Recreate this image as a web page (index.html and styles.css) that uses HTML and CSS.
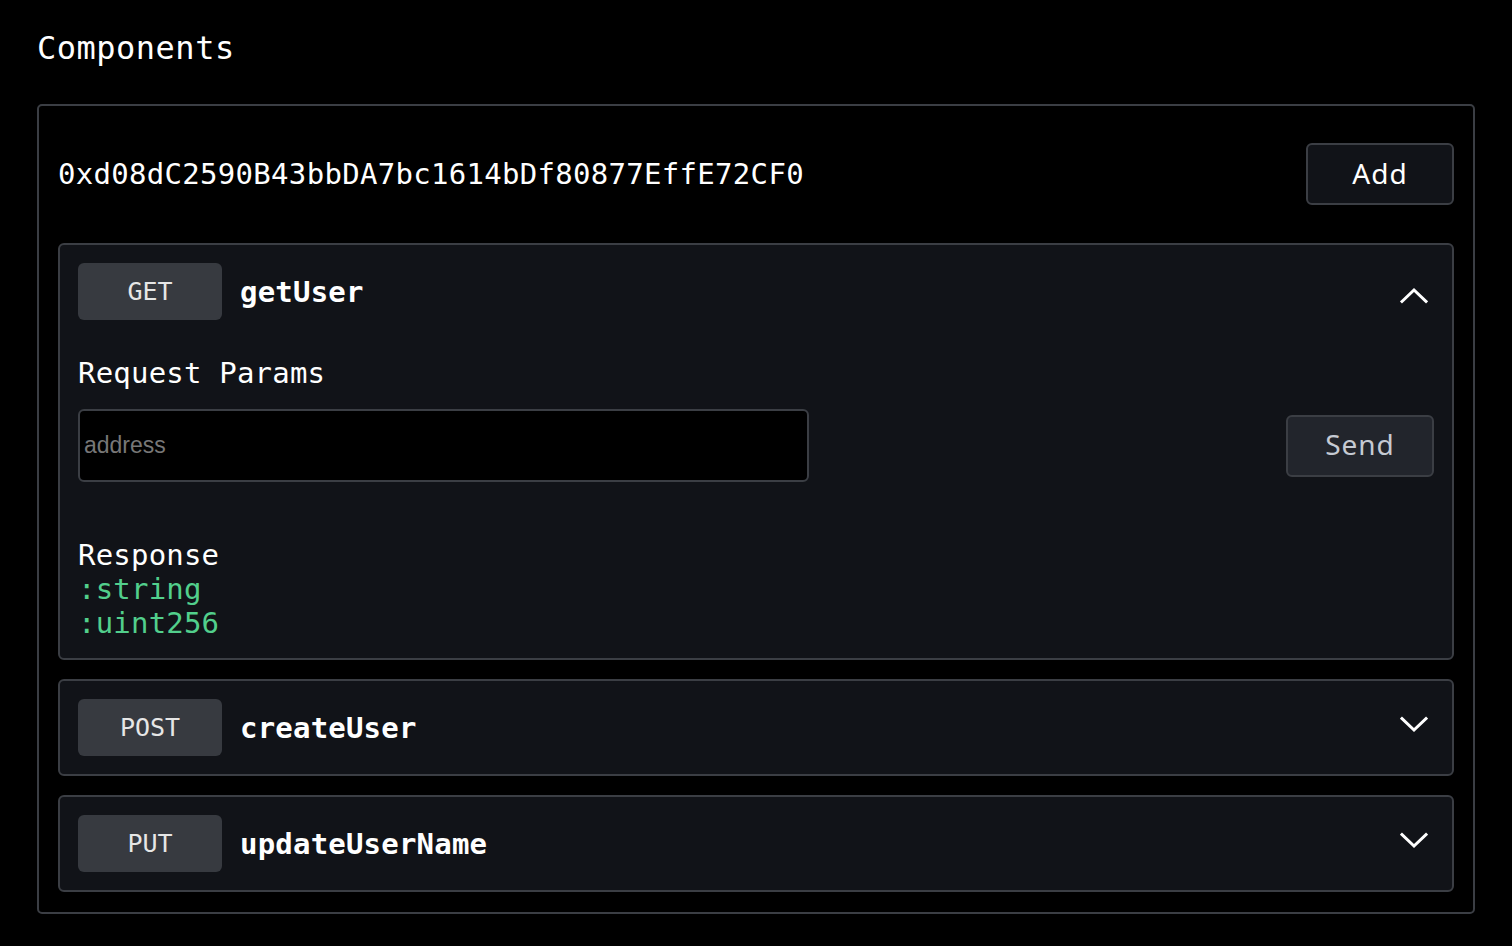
FILE: index.html
```html
<!DOCTYPE html>
<html lang="en">
<head>
<meta charset="utf-8">
<title>Components</title>
<link rel="stylesheet" href="styles.css">
</head>
<body>
<main class="page">
  <h1 class="title">Components</h1>
  <section class="panel">
    <div class="panel-head">
      <div class="address">0xd08dC2590B43bbDA7bc1614bDf80877EffE72CF0</div>
      <button class="btn btn-add">Add</button>
    </div>

    <div class="card">
      <div class="card-head">
        <span class="method">GET</span>
        <span class="fn">getUser</span>
        <span class="chev">
          <svg width="28" height="24" viewBox="0 0 28 24"><path d="M2 21.5 L14 10 L26 21.5" fill="none" stroke="#fff" stroke-width="3" stroke-linecap="square"/></svg>
        </span>
      </div>
      <div class="card-body">
        <div class="label">Request Params</div>
        <div class="param-row">
          <input class="input" type="text" placeholder="address">
          <button class="btn btn-send">Send</button>
        </div>
        <div class="response">
          <div class="label">Response</div>
          <div class="type">:string</div>
          <div class="type">:uint256</div>
        </div>
      </div>
    </div>

    <div class="card">
      <div class="card-head">
        <span class="method">POST</span>
        <span class="fn">createUser</span>
        <span class="chev">
          <svg width="28" height="24" viewBox="0 0 28 24"><path d="M2 2.5 L14 14 L26 2.5" fill="none" stroke="#fff" stroke-width="3" stroke-linecap="square"/></svg>
        </span>
      </div>
    </div>

    <div class="card">
      <div class="card-head">
        <span class="method">PUT</span>
        <span class="fn">updateUserName</span>
        <span class="chev">
          <svg width="28" height="24" viewBox="0 0 28 24"><path d="M2 2.5 L14 14 L26 2.5" fill="none" stroke="#fff" stroke-width="3" stroke-linecap="square"/></svg>
        </span>
      </div>
    </div>
  </section>
</main>
</body>
</html>
```

FILE: styles.css
```css
* { box-sizing: border-box; }

html, body {
  margin: 0;
  background: #000;
  color: #fff;
}

body {
  font-family: "DejaVu Sans Mono", "Liberation Mono", monospace;
}

.page {
  padding: 28px 37px 30px;
}

.title {
  margin: 0 0 36px;
  font-size: 32px;
  line-height: 40px;
  font-weight: 500;
  letter-spacing: 0.5px;
}

.panel {
  border: 2px solid #3b3e44;
  border-radius: 5px;
  padding: 19px 19px 20px;
  display: flex;
  flex-direction: column;
  gap: 19px;
}

.panel-head {
  display: flex;
  align-items: center;
  justify-content: space-between;
  padding: 18px 0 19px;
}

.address {
  font-size: 29px;
  letter-spacing: 0.3px;
  line-height: 34px;
}

.btn {
  font-family: "Noto Sans", "Open Sans", sans-serif;
  font-size: 28px;
  line-height: 1;
  width: 148px;
  height: 62px;
  border-radius: 6px;
  border: 2px solid #3b3e44;
  cursor: pointer;
  letter-spacing: 1px;
  padding: 0 0 3px;
}

.btn-add {
  background: #111318;
  color: #fff;
}

.btn-send {
  background: #22252c;
  color: #c5cad3;
}

.card {
  background: #111318;
  border: 2px solid #3b3e44;
  border-radius: 6px;
  padding: 18px;
}

.card-head {
  display: flex;
  align-items: center;
}

.method {
  width: 144px;
  height: 57px;
  border-radius: 6px;
  background: #373a40;
  color: #e6e6e6;
  font-size: 25px;
  display: flex;
  align-items: center;
  justify-content: center;
}

.fn {
  margin-left: 18px;
  font-size: 29px;
  font-weight: bold;
  letter-spacing: 0.2px;
  flex: 1;
}

.chev {
  display: flex;
  margin-right: 6px;
}

.card-body {
  padding-top: 36px;
}

.label {
  font-size: 29px;
  line-height: 34px;
  letter-spacing: 0.2px;
}

.param-row {
  margin-top: 19px;
  display: flex;
  align-items: center;
  justify-content: space-between;
}

.input {
  width: 731px;
  height: 73px;
  background: #000;
  border: 2px solid #3b3e44;
  border-radius: 6px;
  padding: 0 4px;
  font-family: "Liberation Sans", Arial, sans-serif;
  font-size: 23px;
  color: #fff;
  outline: none;
}

.input::placeholder {
  color: #777;
}

.response {
  margin-top: 56px;
}

.type {
  font-size: 29px;
  line-height: 34px;
  letter-spacing: 0.2px;
  color: #52cf8c;
}
```
